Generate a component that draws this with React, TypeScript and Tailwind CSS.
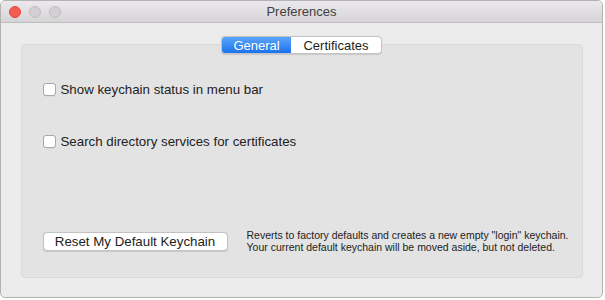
import React from "react";

function Checkbox() {
  return (
    <span className="inline-block w-[13px] h-[13px] rounded-[3px] border border-[#a9a9a9] bg-white shrink-0 shadow-[0_0.5px_0.5px_rgba(0,0,0,0.08)]" />
  );
}

export default function App() {
  return (
    <div className="w-[605px] h-[300px] bg-white" style={{ fontFamily: '"Liberation Sans", Arial, sans-serif' }}>
      <div className="w-[603px] h-[298px] border border-[#b3b3b3] rounded-[5px] bg-[#ececec] flex flex-col overflow-hidden">
        {/* Title bar */}
        <div className="h-[22px] shrink-0 bg-gradient-to-b from-[#ebe9eb] to-[#d6d4d6] border-b border-[#bdbdbd] flex items-center relative">
          <div className="flex items-center gap-[8px] pl-[8px]">
            <span className="w-[12px] h-[12px] rounded-full bg-[#f45b53] border border-[#e2463f]" />
            <span className="w-[12px] h-[12px] rounded-full bg-[#d2d0d2] border border-[#bfbdbf]" />
            <span className="w-[12px] h-[12px] rounded-full bg-[#d2d0d2] border border-[#bfbdbf]" />
          </div>
          <div className="absolute inset-0 flex items-center justify-center text-[13px] text-[#3f3f3f]">Preferences</div>
        </div>

        {/* Content */}
        <div className="flex flex-col items-center pt-[13px] px-[20px]">
          <div className="relative z-10 flex h-[18px] rounded-[4px] border border-[#c4c4c4] bg-white text-[13px] leading-none shadow-[0_0.5px_1px_rgba(0,0,0,0.12)] overflow-hidden">
            <div className="w-[69px] flex items-center justify-center bg-gradient-to-b from-[#5aa4f8] to-[#1a72ee] text-white">General</div>
            <div className="w-[90px] flex items-center justify-center text-[#1e1e1e]">Certificates</div>
          </div>
          <div className="-mt-[10px] w-[562px] h-[234px] rounded-[4px] bg-[#e3e3e3] border border-[#dadada] flex flex-col px-[21px]">
            <div className="flex items-center gap-[5px] mt-[38px] h-[13px] text-[13.3px] text-[#222]">
              <Checkbox />
              <span>Show keychain status in menu bar</span>
            </div>
            <div className="flex items-center gap-[5px] mt-[39px] h-[13px] text-[13.3px] text-[#222]">
              <Checkbox />
              <span>Search directory services for certificates</span>
            </div>
            <div className="flex items-start mt-[84px]">
              <div className="w-[185px] h-[19px] shrink-0 rounded-[4px] border border-[#c2c2c2] bg-white flex items-center justify-center text-[13.3px] text-[#222] shadow-[0_0.5px_1px_rgba(0,0,0,0.12)]">
                Reset My Default Keychain
              </div>
              <div className="ml-[19px] -mt-[3px] text-[10.5px] leading-[12px] text-[#222] whitespace-nowrap">
                <div>Reverts to factory defaults and creates a new empty "login" keychain.</div>
                <div>Your current default keychain will be moved aside, but not deleted.</div>
              </div>
            </div>
          </div>
        </div>
      </div>
    </div>
  );
}
